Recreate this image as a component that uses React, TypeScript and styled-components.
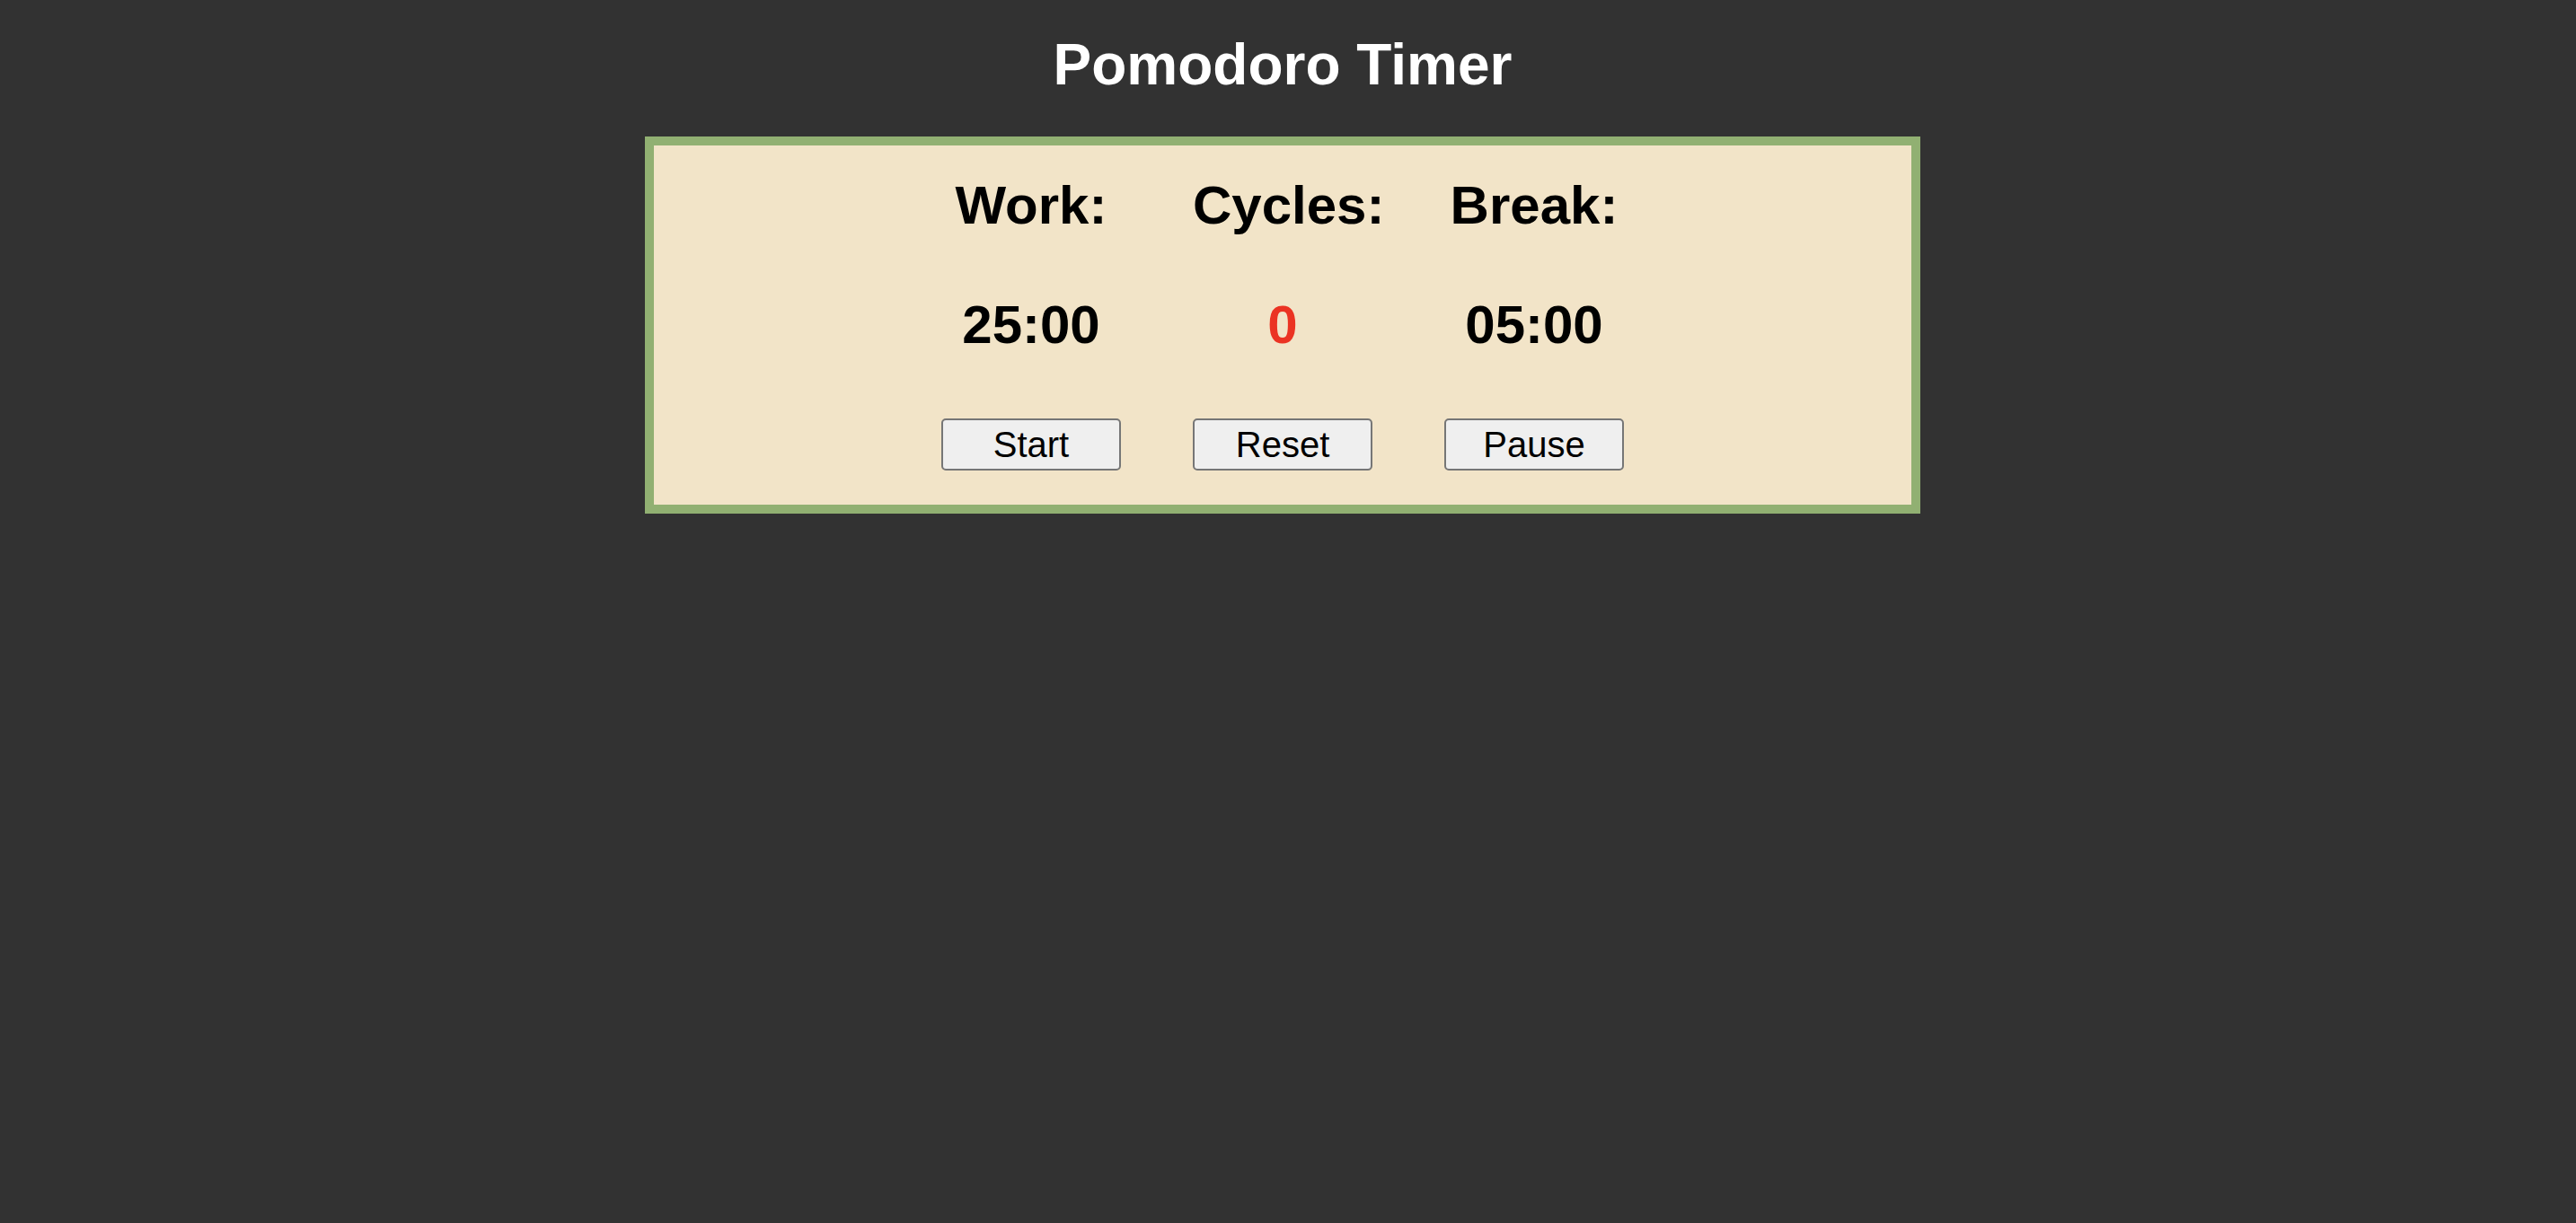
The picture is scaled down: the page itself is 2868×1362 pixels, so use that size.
import React from "react";
import styled, { createGlobalStyle } from "styled-components";

const GlobalStyle = createGlobalStyle`
  html, body {
    margin: 0;
    padding: 0;
    background: #323232;
    font-family: "Liberation Sans", Arial, Helvetica, sans-serif;
  }
`;

const Page = styled.main`
  min-height: 1362px;
  box-sizing: border-box;
  padding: 0 12px 0 0;
  display: flex;
  flex-direction: column;
  align-items: center;
`;

const Title = styled.h1`
  margin: 35px 0 42px;
  font-size: 64px;
  line-height: 75px;
  font-weight: 700;
  color: #ffffff;
  text-align: center;
`;

const Panel = styled.section`
  width: 1400px;
  height: 400px;
  box-sizing: content-box;
  border: 10px solid #91b072;
  background: #f2e4c8;
  padding: 0;
  display: flex;
  flex-direction: column;
  align-items: center;
`;

const Row = styled.div<{ $top: number }>`
  display: grid;
  grid-template-columns: repeat(3, 200px);
  column-gap: 80px;
  justify-content: center;
  margin-top: ${(p) => p.$top}px;
`;

const Label = styled.div`
  font-size: 60px;
  line-height: 70px;
  font-weight: 700;
  color: #000;
  text-align: center;
  white-space: nowrap;
`;

const Value = styled.div<{ $accent?: boolean }>`
  font-size: 60px;
  line-height: 70px;
  font-weight: 700;
  color: ${(p) => (p.$accent ? "#eb3323" : "#000")};
  text-align: center;
  white-space: nowrap;
`;

const Button = styled.button`
  width: 200px;
  height: 58px;
  box-sizing: border-box;
  padding: 0;
  border: 2px solid #767676;
  border-radius: 5px;
  background: #efefef;
  color: #000;
  font-family: "Liberation Sans", Arial, Helvetica, sans-serif;
  font-size: 40px;
  line-height: 54px;
  cursor: pointer;
`;

export default function App() {
  const work = "25:00";
  const cycles = 0;
  const brk = "05:00";
  return (
    <>
      <GlobalStyle />
      <Page>
        <Title>Pomodoro Timer</Title>
        <Panel>
          <Row $top={32}>
            <Label>Work:</Label>
            <Label>Cycles:</Label>
            <Label>Break:</Label>
          </Row>
          <Row $top={63}>
            <Value>{work}</Value>
            <Value $accent>{cycles}</Value>
            <Value>{brk}</Value>
          </Row>
          <Row $top={69}>
            <Button>Start</Button>
            <Button>Reset</Button>
            <Button>Pause</Button>
          </Row>
        </Panel>
      </Page>
    </>
  );
}
